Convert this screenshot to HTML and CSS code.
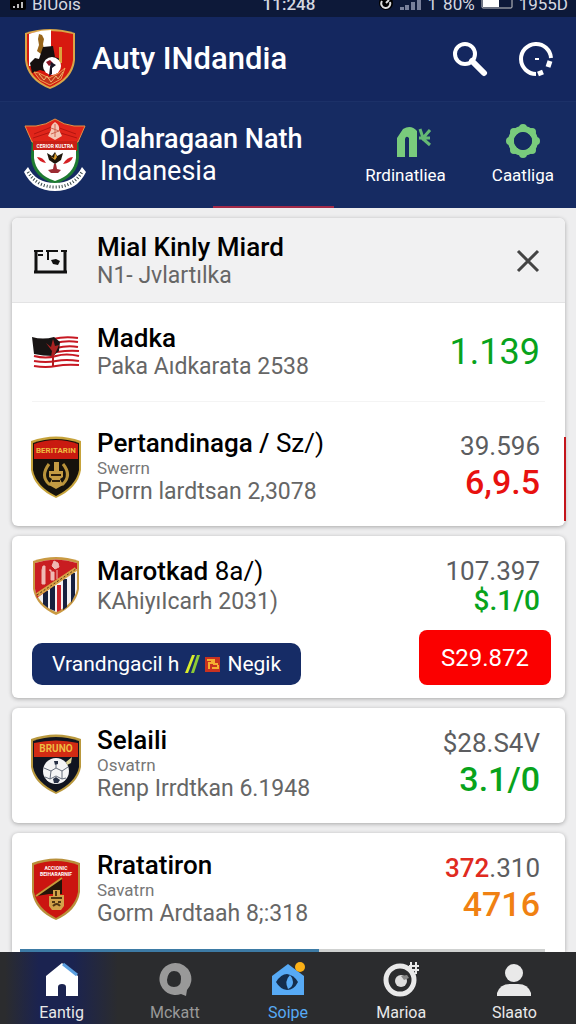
FILE: index.html
```html
<!DOCTYPE html>
<html lang="id">

<head>
  <meta charset="UTF-8">
  <meta name="viewport" content="width=device-width, initial-scale=1.0">
  <title>Olahragaan Nath Indanesia</title>
  <link rel="stylesheet" href="styles.css">
</head>

<body>
  <div class="status">
    <div class="status-left">
      <svg width="16" height="10" viewBox="0 0 16 10"><path d="M0 0h16v8q0 2-2 2H2Q0 10 0 8z" fill="#000"/><path d="M3 8V6h2v2zM7 8V4h2v4zM11 8V2h2v6z" fill="#bbb"/></svg>
      <span>BIUois</span>
    </div>
    <span class="status-time">11:248</span>
    <div class="status-right">
      <svg width="16" height="10" viewBox="0 0 16 10"><circle cx="8" cy="3" r="7" fill="#000"/><path d="M4 1a4.500 4.500 0 1 0 8 1M8 3l3-3" fill="none" stroke="#ddd" stroke-width="2"/></svg>
      <svg width="22" height="10" viewBox="0 0 22 10"><path d="M0 10V7h4v3zM5 10V5h4v5zM11 10V2h4v8zM17 10V0h4v10z" fill="#78809a"/></svg>
      <span>1</span>
      <span>80%</span>
      <svg width="32" height="10" viewBox="0 0 32 10"><path d="M1-2v9q0 1 1 1h28q1 0 1-1v-9" fill="none" stroke="#ccc"/><path d="M2 0h16v7H2z" fill="#fff"/></svg>
      <span>1955D</span>
    </div>
  </div>

  <header class="topbar">
    <svg class="logo" width="52" height="62" viewBox="0 0 52 62">
      <path d="M1 5Q26-3 51 5v27Q49 52 26 61 3 52 1 32z" fill="#d9a648"/>
      <path d="M3 6Q26 0 49 6v26Q47 50 26 59 5 50 3 32z" fill="#d7190f"/>
      <path d="M8 5q9-3 19-3v36H5V6z" fill="#fff"/>
      <path d="M15 6l3 1 2 4-1 5 1 6-3 4-4-3 2-6-1-6z" fill="#98651a"/>
      <path d="M6 35l5-5 4 1 4-12 10-1 2 11 5 2-3 9-7 5-10-3-8 3z" fill="#16100f"/>
      <path d="M35 19h3v16h-8v-3h5z" fill="#dba33c"/>
      <circle cx="28" cy="38" r="9" fill="#fff"/>
      <path d="M22 34l4-2 3 3-4 3z" fill="#8d1524"/>
      <path d="M27 34l5 3-4 3v6l-3 2 1-9z" fill="#171525"/>
      <path d="M10 44l5 1 10 5 10-5 6-5-4 11-11 6-10-5z" fill="#c53419" stroke="#eda052"/>
      <path d="M15 46l5 6 3-4 4 6 5-6 2 3 5-7" fill="none" stroke="#efb66e"/>
    </svg>
    <h1 class="app-name">Auty INdandia</h1>
    <button class="icon-button" aria-label="Search">
      <svg width="36" height="36" viewBox="0 0 36 36" fill="none" stroke="#fff"><circle cx="13" cy="13" r="10" stroke-width="4"/><path d="M20 20l12 12" stroke-width="6" stroke-linecap="round"/></svg>
    </button>
    <button class="icon-button" aria-label="Refresh">
      <svg width="36" height="36" viewBox="0 0 36 36" fill="none" stroke="#fff" stroke-width="4"><path d="M18 33A15 15 0 1 1 33 17"/><path d="M20 33l5-2M30 26l2-6" stroke-width="5"/><path d="M17 18h4" stroke-width="2"/></svg>
    </button>
  </header>

  <section class="club">
    <svg class="logo" width="62" height="74" viewBox="0 0 62 74">
      <path d="M8 17l46 0 1 22q-1 20-24 27Q8 59 7 39z" fill="#1e7b31"/>
      <path d="M1 8l11 0q10-1 19-7 9 6 19 7h11l-7 16H8z" fill="#e0251a" stroke="#e89242"/>
      <path d="M10 16L30 8l22 8M9 20l21-7 23 7" fill="none" stroke="#b31510"/>
      <path d="M31 4q5 3 4 8l3 6-7 4-7-4 3-6q-1-5 4-8z" fill="#f5c6b5"/>
      <path d="M31 6v13M27 10l8 3M27 16l8-3" stroke="#cf6450"/>
      <path d="M9 23h44v10H9z" fill="#c92016"/>
      <text class="crest-text" x="31" y="30" font-size="5">CERIOR KULTRA</text>
      <path d="M10 32h42v8q-2 17-21 23Q12 57 10 40z" fill="#fff"/>
      <path d="M23 35l5 3 3-4 2 4 6-3-2 7-6 4-6-4z" fill="#1d160b"/>
      <path d="M26 38l4 2 1-5 2 4-2 3z" fill="#e1a12f"/>
      <path d="M13 39q6 0 9 6-7-1-9-6zM49 39q-6 0-10 7 8-1 10-7z" fill="#d52024"/>
      <path d="M30 46h2l1 5 4 1-3 3h-7l-3-3 5-1z" fill="#9c2b32"/>
      <path d="M4 49q8 16 27 16t27-16l4 5Q53 73 31 73T0 54z" fill="#fff"/>
      <path d="M4 54q9 15 27 15t27-15" fill="none" stroke="#344" stroke-width="3" stroke-dasharray="1 2"/>
    </svg>
    <div class="club-name">
      <h2>Olahragaan Nath</h2>
      <p>Indanesia</p>
    </div>
    <div class="club-actions">
      <button class="action">
        <svg width="52" height="36" viewBox="-16 0 52 36"><path d="M1 34V15L7 6q8-5 14 2v26h-8V15q-3-3-4 1v18z" fill="#79cb7c"/><path d="M24 6l3 9 7-8M23 15h11M26 15l8 7" fill="none" stroke="#65b974" stroke-width="3"/></svg>
        <span>Rrdinatliea</span>
      </button>
      <button class="action">
        <svg width="36" height="36" viewBox="0 0 36 36" fill="none" stroke="#79cb7c"><circle cx="18" cy="18" r="12" stroke-width="6"/><g fill="#79cb7c" stroke="none"><circle cx="18" cy="5" r="4"/><circle cx="27" cy="9" r="4"/><circle cx="31" cy="18" r="4"/><circle cx="27" cy="27" r="4"/><circle cx="18" cy="31" r="4"/><circle cx="9" cy="27" r="4"/><circle cx="5" cy="18" r="4"/><circle cx="9" cy="9" r="4"/></g><circle cx="18" cy="18" r="9" fill="#162b62" stroke="none"/></svg>
        <span>Caatliga</span>
      </button>
    </div>
  </section>

  <main class="list">
    <section class="card card-first">
      <div class="row row-head">
        <svg class="row-icon" width="50" height="36" viewBox="0 0 50 36"><path d="M5 30V8M34 30V8M3 29h33" fill="none" stroke="#111" stroke-width="3"/><path d="M3 8h9M15 8h12M30 8h6M7 12h5M17 8v9" fill="none" stroke="#111" stroke-width="2"/><path d="M20 17l5-1 4 2-2 4-5-1z" fill="#111"/></svg>
        <div class="info">
          <h3>Mial Kinly Miard</h3>
          <p>N1- Jvlartılka</p>
        </div>
        <button class="close" aria-label="Close">
          <svg width="24" height="24" viewBox="0 0 24 24"><path d="M2 2l20 20M22 2L2 22" stroke="#444" stroke-width="3"/></svg>
        </button>
      </div>
      <div class="row">
        <svg class="row-icon" width="50" height="36" viewBox="0 0 50 36">
          <path d="M1 3q11 3 22 0 11-3 24 0l1 29q-11-2-22 1-12 2-23 0z" fill="#fff"/>
          <path d="M22 5q12-3 25-1M24 9q12-3 23-1M25 14q12-3 22-1M26 18q12-2 22-1M3 22q12 3 22 0t23 0M3 27q12 2 22 0t23 0M3 32q12 2 22 0t23-1" fill="none" stroke="#c71822" stroke-width="2"/>
          <path d="M1 3q11 3 22 0l6 5-1 9-6 5q-10 0-19-2z" fill="#181414"/>
          <path d="M15 9l5 4 2-8 2 7 4-1-4 9-4 3 1-6z" fill="#a82322"/>
          <path d="M22 20v12" stroke="#b31c20" stroke-width="2"/>
        </svg>
        <div class="info">
          <h3>Madka</h3>
          <p>Paka Aıdkarata 2538</p>
        </div>
        <div class="values"><strong class="single green">1.139</strong></div>
      </div>
      <div class="row row-tall row-line">
        <svg class="row-icon" width="50" height="62" viewBox="0 0 50 62">
          <path d="M0 5Q25-4 50 5v29Q47 52 25 62 3 52 0 34z" fill="#c6a33b"/>
          <path d="M2 7Q25-1 48 7v27Q45 50 25 60 5 50 2 34z" fill="#15120c"/>
          <path d="M3 8Q25 0 47 8v15H3z" fill="#c91a10"/>
          <text class="crest-text gold" x="25" y="17" font-size="8">BERITARIN</text>
          <path d="M18 28q-9 12 0 20h14q9-9 0-20" fill="none" stroke="#b9933a" stroke-width="3"/>
          <path d="M23 26h5v9h4v6l-3 2 3 6-7 4-7-4 3-6-3-2v-6h5z" fill="#c49b43"/>
          <path d="M20 39h10M21 45h8" stroke="#2c1d0b" stroke-width="2"/>
        </svg>
        <div class="info">
          <h3>Pertandinaga / <span class="light">Sz/)</span></h3>
          <small>Swerrn</small>
          <p>Porrn lardtsan 2,3078</p>
        </div>
        <div class="values"><span>39.596</span><strong class="red">6,9.5</strong></div>
      </div>
    </section>

    <section class="card card-offer">
      <div class="row row-offer">
        <svg class="row-icon" width="50" height="60" viewBox="0 0 50 60">
          <path d="M2 5Q25-3 48 5v28Q45 50 25 59 5 50 2 33z" fill="#c99a43"/>
          <path d="M4 7Q25 0 46 7v26Q43 48 25 56 7 48 4 33z" fill="#f3f1f3"/>
          <path d="M12 35h5v17l-5-4zM19 30h5v25l-5-2zM32 23h4v28l-4 3zM40 17h4v22l-4 8z" fill="#16203e"/>
          <path d="M26 29h4v25l-4 2z" fill="#cb2029"/>
          <path d="M4 7Q25 0 46 7v6L6 42 4 33z" fill="#c91d21"/>
          <path d="M6 39L45 13" stroke="#d7a346" stroke-width="4"/>
          <path d="M6 39L45 13" stroke="#51301a" stroke-dasharray="2 2"/>
          <path d="M12 10h2v18h-3V14zM18 14h2v10h3v-8h-3M23 5l4 2 1 4-4 2-3-3zM26 14v9" fill="#efb9b4" stroke="#efb9b4"/>
        </svg>
        <div class="info">
          <h3>Marotkad <span class="light">8a/)</span></h3>
          <p>KAhiyıIcarh 2031)</p>
        </div>
        <div class="values"><span>107.397</span><strong class="short green">$.1/0</strong></div>
      </div>
      <div class="offer">
        <button class="chip">
          <span>Vrandngacil h</span>
          <svg width="36" height="20" viewBox="0 0 36 20"><path d="M0 19L7 1h3L3 19z" fill="#d9ec2c"/><path d="M6 19L12 1h3L9 19z" fill="#8dcb35"/><path d="M20 3h15v15H20z" fill="#c83220"/><path d="M22 6h5v3h-3v6M29 5v5h4M27 14h6v-3" fill="none" stroke="#f5ae31" stroke-width="2"/></svg>
          <span>Negik</span>
        </button>
        <button class="price">S29.872</button>
      </div>
    </section>

    <section class="card">
      <div class="row row-tall">
        <svg class="row-icon" width="50" height="60" viewBox="0 0 50 60">
          <path d="M0 5Q25-4 50 5v28Q47 50 25 60 3 50 0 33z" fill="#b9983d"/>
          <path d="M2 7Q25-1 48 7v26Q45 48 25 58 5 48 2 33z" fill="#101420"/>
          <path d="M3 9Q25 4 47 9v14H3z" fill="#d12b14"/>
          <text class="crest-text gold" x="25" y="18" font-size="10">BRUNO</text>
          <circle cx="25" cy="37" r="13" fill="#f4f4f5"/>
          <path d="M23 27l4 0 0 3-3 1z" fill="#273045"/>
          <path d="M13 34l7 3 5-3 6 3 6-4M20 37l-1 8-5-2M31 37l0 8 4-1M19 45l6-3 6 3M25 34v-4" fill="none" stroke="#656d7b"/>
          <path d="M22 45l3-2 4 3-2 3h-4z" fill="#273045"/>
          <path d="M35 28l6-5-1 6-4 2z" fill="#ddd395"/>
        </svg>
        <div class="info">
          <h3>Selaili</h3>
          <small>Osvatrn</small>
          <p>Renp Irrdtkan 6.1948</p>
        </div>
        <div class="values"><span>$28.S4V</span><strong class="green">3.1/0</strong></div>
      </div>
    </section>

    <section class="card card-last">
      <div class="row row-tall">
        <svg class="row-icon" width="50" height="62" viewBox="0 0 50 62">
          <path d="M1 5Q25-4 49 5v29Q46 53 25 62 4 53 1 34z" fill="#b8903b"/>
          <path d="M3 7Q25-1 47 7v27Q44 50 25 60 6 50 3 34z" fill="#cb1510"/>
          <text class="crest-text" x="25" y="12" font-size="5">ACCIONIC</text>
          <text class="crest-text" x="25" y="18" font-size="5">BEIHARARNIF</text>
          <path d="M5 37L31 20v16H18l-12 2z" fill="#251509"/>
          <path d="M5 38L31 20" stroke="#c79b3c" stroke-width="2"/>
          <path d="M22 32h7v5h4v11l-3 4h-9l-3-4V38h4z" fill="#d3a34a"/>
          <path d="M20 40h11M21 44h3M27 44h3M22 48q4-4 7 0M25 33v5" fill="none" stroke="#513713" stroke-width="2"/>
        </svg>
        <div class="info">
          <h3>Rratatiron</h3>
          <small>Savatrn</small>
          <p>Gorm Ardtaah 8;:318</p>
        </div>
        <div class="values"><span><b>372</b>.310</span><strong class="orange">4716</strong></div>
      </div>
      <div class="scroll-line"></div>
    </section>
  </main>

  <nav class="tabs">
    <a class="tab tab-home" href="#">
      <svg width="36" height="36" viewBox="0 0 36 36"><path d="M2 14L18 1l16 13v20H22V25q0-3-4-3t-4 3v9H2z" fill="#fff"/><path d="M19 2l14 11" stroke="#5b9fe0" stroke-width="3"/></svg>
      <span>Eantig</span>
    </a>
    <a class="tab tab-muted" href="#">
      <svg width="36" height="36" viewBox="0 0 36 36"><path fill-rule="evenodd" d="M18 1a16 16 0 1 0 6 31l5 2 1-6A16 16 0 0 0 18 1zM17 9q7 0 7 8t-7 8q-7 0-7-7 1-9 7-9z" fill="#999"/></svg>
      <span>Mckatt</span>
    </a>
    <a class="tab tab-blue" href="#">
      <svg width="36" height="36" viewBox="0 0 36 36"><path d="M2 14L18 2l16 12v19H2z" fill="#57aaf5"/><path d="M6 20q5-8 11-8 7 1 11 8-4 8-11 8-7-1-11-8z" fill="#142d4c"/><path d="M20 13q-6 6-2 14 5-2 5-7 0-4-3-7z" fill="#57aaf5"/><circle cx="30" cy="5" r="5" fill="#fbb016"/></svg>
      <span>Soipe</span>
    </a>
    <a class="tab" href="#">
      <svg width="36" height="36" viewBox="0 0 36 36"><circle cx="17" cy="18" r="14" fill="none" stroke="#e9e9e9" stroke-width="5"/><path d="M21 11a8 8 0 1 0 3 9" fill="none" stroke="#2b2c2e" stroke-width="2"/><circle cx="18" cy="19" r="6" fill="#ddd"/><path d="M18 14l6-1 2 3-5 2z" fill="#888"/><path d="M26 4h10M26 8h10M28 0v12M33 0v12" stroke="#e9e9e9" stroke-width="2"/></svg>
      <span>Marioa</span>
    </a>
    <a class="tab" href="#">
      <svg width="36" height="36" viewBox="0 0 36 36" fill="#e9e9e9"><circle cx="18" cy="11" r="9"/><path d="M1 34v-3q3-9 13-9h8q10 0 13 9v3z"/></svg>
      <span>Slaato</span>
    </a>
  </nav>
</body>

</html>
```

FILE: styles.css
```css
* {
  box-sizing: border-box;
}

body {
  margin: 0;
  min-height: 100vh;
  display: flex;
  flex-direction: column;
  background: #eeeeef;
  font-family: Roboto, "Liberation Sans", sans-serif;
  color: #000;
}

h1,
h2,
h3,
p {
  margin: 0;
  font-weight: 500;
}

button {
  padding: 0;
  border: none;
  background: none;
  font-family: inherit;
  color: inherit;
  cursor: pointer;
}

svg {
  display: block;
  flex: none;
}

/* status bar */
.status {
  display: flex;
  justify-content: space-between;
  height: 17px;
  padding: 0 8px 0 10px;
  background: #0d1939;
  color: #d5d8e0;
  font-size: 17px;
  line-height: 8px;
}

.status-left,
.status-right {
  display: flex;
  flex: 1;
  gap: 6px;
}

.status-right {
  justify-content: flex-end;
}

.status-time {
  font-weight: 500;
}

/* header */
.topbar {
  display: flex;
  align-items: center;
  height: 85px;
  padding: 0 22px 0 24px;
  background: #14275f;
  border-bottom: 1px solid #1c3168;
  color: #fff;
}

.app-name {
  flex: 1;
  margin-left: 16px;
  font-size: 31px;
  line-height: 36px;
}

.icon-button {
  margin-left: 30px;
}

.club {
  position: relative;
  display: flex;
  align-items: center;
  height: 106px;
  padding: 0 22px 0 24px;
  background: #162b62;
  color: #fff;
}

.club::after {
  content: "";
  position: absolute;
  left: 37%;
  bottom: 0;
  width: 21%;
  height: 2px;
  background: #a32a48;
}

.club-name {
  flex: 1;
  margin-left: 14px;
}

.club-name h2,
.club-name p {
  font-size: 27px;
  line-height: 32px;
}

.club-name p {
  font-weight: 400;
}

.club-actions {
  display: flex;
  gap: 46px;
}

.action {
  display: flex;
  flex-direction: column;
  align-items: center;
  gap: 4px;
  font-size: 17px;
  line-height: 24px;
}

/* cards */
.list {
  flex: 1;
  display: flex;
  flex-direction: column;
  gap: 10px;
  padding: 10px 11px 0 12px;
}

.card {
  background: #fff;
  border-radius: 6px;
  box-shadow: 0 1px 4px rgba(0, 0, 0, 0.3);
}

.card-first {
  position: relative;
}

.card-first::after {
  content: "";
  position: absolute;
  right: -1px;
  bottom: 5px;
  width: 2px;
  height: 84px;
  background: #c4151b;
}

.row {
  display: flex;
  align-items: center;
  gap: 16px;
  padding: 20px 25px 20px 19px;
}

.row-head {
  padding-top: 14px;
  padding-bottom: 12px;
  background: #f1f1f2;
  border-bottom: 1px solid #e3e3e4;
  border-radius: 6px 6px 0 0;
}

.row-tall {
  padding-top: 17px;
}

.row-line {
  margin-top: 10px;
  position: relative;
}

.row-line::before {
  content: "";
  position: absolute;
  top: -10px;
  left: 20px;
  right: 20px;
  border-top: 1px solid #f4f4f4;
}

.row-offer {
  padding-bottom: 14px;
}

.row-offer h3 {
  margin-bottom: 2px;
}

.info {
  flex: 1;
}

.info h3 {
  font-size: 26px;
  line-height: 30px;
}

.info small {
  display: block;
  color: #777;
  font-size: 17px;
  line-height: 20px;
}

.info p {
  color: #666;
  font-size: 23px;
  font-weight: 400;
  line-height: 28px;
}

.light {
  font-weight: 400;
}

.close {
  line-height: 0;
}

.values {
  display: flex;
  flex-direction: column;
  align-items: flex-end;
  color: #5c5d60;
  font-size: 26px;
  line-height: 30px;
}

.values strong {
  font-size: 34px;
  font-weight: 500;
  line-height: 42px;
}

.values .single {
  font-size: 36px;
  font-weight: 400;
}

.values .short {
  font-size: 28px;
  line-height: 30px;
}

.values b {
  color: #e02a20;
  font-weight: 500;
}

.values .green {
  color: #08a31c;
}

.values .red {
  color: #e8110f;
}

.values .orange {
  color: #f08112;
}

.offer {
  display: flex;
  align-items: flex-end;
  justify-content: space-between;
  padding: 0 14px 13px 20px;
}

.chip {
  display: flex;
  align-items: center;
  gap: 6px;
  height: 42px;
  padding: 0 20px;
  border-radius: 10px;
  background: #162c66;
  color: #fff;
  font-size: 21px;
}

.price {
  height: 55px;
  padding: 0 22px;
  border-radius: 8px;
  background: #fb0000;
  color: #fff;
  font-size: 24px;
}

.card-last {
  flex: 1;
  display: flex;
  flex-direction: column;
  justify-content: space-between;
  border-radius: 6px 6px 0 0;
}

.scroll-line {
  height: 3px;
  margin: 0 20px 0 8px;
  background: linear-gradient(to right, #3d7ba5 57%, #cfd1d0 57%);
}

.crest-text {
  fill: #fff;
  font-weight: 700;
  text-anchor: middle;
}

.gold {
  fill: #eebc42;
}

/* bottom navigation */
.tabs {
  position: sticky;
  bottom: 0;
  display: flex;
  height: 72px;
  padding: 0 5px;
  background: #2b2c2e;
}

.tab {
  flex: 1;
  display: flex;
  flex-direction: column;
  align-items: center;
  gap: 4px;
  padding-top: 10px;
  color: #e9e9e9;
  font-size: 16px;
  line-height: 22px;
  text-decoration: none;
}

.tab-home {
  background: linear-gradient(to right, #2b2c2e, #1b2350 30%, #1b2350 60%, #2b2c2e);
}

.tab-muted {
  color: #999;
}

.tab-blue {
  color: #57aaf5;
}
```
